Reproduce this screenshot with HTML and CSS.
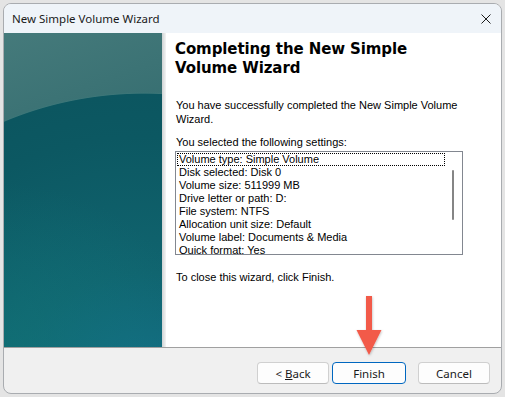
FILE: index.html
```html
<!DOCTYPE html>
<html lang="en">
<head>
    <meta charset="UTF-8" />
    <title>New Simple Volume Wizard</title>
    <link rel="stylesheet" href="styles.css">
</head>
<body>
<div class="window">
    <div class="titlebar">
        <span class="title">New Simple Volume Wizard</span>
        <svg class="close" width="10" height="10" viewBox="0 0 10 10">
            <path d="M0.5 0.5 L9.5 9.5 M9.5 0.5 L0.5 9.5" stroke="#1b1b1b" stroke-width="1"/>
        </svg>
    </div>

    <div class="main">
        <div class="side"></div>
        <div class="side-shade"></div>
        <div class="content">
            <h1>Completing the New Simple Volume Wizard</h1>
            <p class="intro">You have successfully completed the New Simple Volume Wizard.</p>
            <p class="label">You selected the following settings:</p>
            <div class="listbox">
                <ul class="items">
                    <li class="focused">Volume type: Simple Volume</li>
                    <li>Disk selected: Disk 0</li>
                    <li>Volume size: 511999 MB</li>
                    <li>Drive letter or path: D:</li>
                    <li>File system: NTFS</li>
                    <li>Allocation unit size: Default</li>
                    <li>Volume label: Documents &amp; Media</li>
                    <li>Quick format: Yes</li>
                </ul>
                <div class="scrollbar"><div class="thumb"></div></div>
            </div>
            <p class="closing">To close this wizard, click Finish.</p>
        </div>
    </div>

    <div class="footer">
        <button class="btn">&lt; <u>B</u>ack</button>
        <button class="btn default">Finish</button>
        <button class="btn cancel">Cancel</button>
    </div>
</div>

<!-- annotation arrow pointing at Finish -->
<svg class="arrow" width="32" height="66" viewBox="0 0 32 66">
    <defs>
        <filter id="shadow" x="-30%" y="-20%" width="160%" height="140%">
            <feDropShadow dx="0.5" dy="1" stdDeviation="1" flood-color="#000" flood-opacity="0.25"/>
        </filter>
    </defs>
    <g filter="url(#shadow)" fill="#f25a4a">
        <rect x="12" y="2" width="6" height="36"/>
        <polygon points="2.5,36 27.5,36 15,61"/>
    </g>
</svg>
</body>
</html>
```

FILE: styles.css
```css
body {
    margin: 0;
    padding: 0;
    width: 505px;
    height: 397px;
    overflow: hidden;
    background-color: #e4e4e4;
    font-family: 'Liberation Sans', Arial, sans-serif;
    position: relative;
}

.window {
    margin: 3px 0 0 3px;
    width: 497px;
    height: 389px;
    border: 1px solid #a9acb0;
    border-radius: 8px;
    overflow: hidden;
    display: flex;
    flex-direction: column;
    background-color: #f0f0f0;
}

.titlebar {
    height: 29px;
    flex: none;
    background-color: #eff4f9;
    display: flex;
    align-items: center;
    justify-content: space-between;
    padding: 0 10px 0 8px;
}

.title {
    font-family: 'Noto Sans', sans-serif;
    font-size: 11.5px;
    color: #1a1a1a;
}

.close {
    margin-top: 1px;
}

.main {
    height: 314px;
    flex: none;
    display: flex;
    background-color: #ffffff;
    border-bottom: 1px solid #a0a0a0;
}

.side {
    width: 158px;
    flex: none;
    background:
        radial-gradient(ellipse 200px 180px at 0px 330px, rgba(18, 122, 124, 0.5), rgba(18, 122, 124, 0)),
        radial-gradient(ellipse 332px 300px at 140px 359px, #14708a 0%, #10646f 40%, #0c5862 85%, #0c5660 99.3%, rgba(60, 120, 122, 0.6) 99.6%, rgba(0, 0, 0, 0) 100%),
        linear-gradient(160deg, #457a7b 0%, #336c6f 45%, #24606a 100%);
}

.side-shade {
    width: 4px;
    flex: none;
    background: linear-gradient(to right, #cfd3d4, #f4f4f4);
}

.content {
    flex: 1;
    padding: 7px 0 0 9px;
    font-size: 11px;
    color: #000000;
}

h1 {
    margin: 0;
    width: 250px;
    font-family: 'DejaVu Sans', Verdana, sans-serif;
    font-weight: bold;
    font-size: 15px;
    line-height: 19px;
    letter-spacing: -0.1px;
}

.intro {
    margin: 20px 0 0 1px;
    width: 290px;
    line-height: 14px;
}

.label {
    margin: 9px 0 0 1px;
    line-height: 14px;
}

.listbox {
    margin-top: 2px;
    width: 286px;
    height: 102px;
    border: 1px solid #828790;
    display: flex;
    overflow: hidden;
}

.items {
    list-style: none;
    margin: 0;
    padding: 1px 0 0 1px;
    flex: 1;
}

.items li {
    height: 13px;
    line-height: 13px;
    padding-left: 2px;
    white-space: nowrap;
}

.items li.focused {
    outline: 1px dotted #000000;
    outline-offset: -1px;
}

.scrollbar {
    width: 17px;
    flex: none;
}

.thumb {
    width: 2px;
    height: 50px;
    margin: 18px 0 0 7px;
    border-radius: 1px;
    background-color: #858585;
}

.closing {
    margin: 15px 0 0 1px;
    line-height: 14px;
}

.footer {
    flex: 1;
    display: flex;
    justify-content: flex-end;
    align-items: flex-start;
    padding: 14px 11px 0 0;
}

.btn {
    width: 72px;
    height: 22px;
    margin-left: 3px;
    padding: 0;
    font-family: 'Noto Sans', sans-serif;
    font-size: 11.5px;
    color: #1a1a1a;
    background-color: #fdfdfd;
    border: 1px solid #d0d0d0;
    border-bottom-color: #bcbcbc;
    border-radius: 4px;
}

.btn.default {
    width: 74px;
    border: 1px solid #0067c0;
}

.btn.cancel {
    margin-left: 12px;
}

.arrow {
    position: absolute;
    left: 354px;
    top: 294px;
}
```
